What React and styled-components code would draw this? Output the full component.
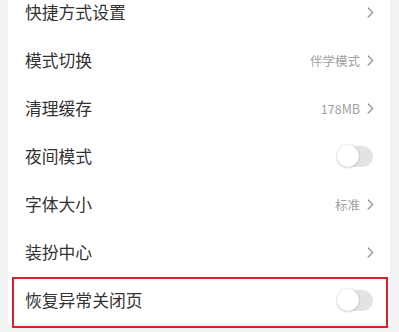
import React from "react";
import styled, { createGlobalStyle } from "styled-components";

const Global = createGlobalStyle`
  html, body { margin: 0; padding: 0; background: #f2f2f2; overflow: hidden; }
  body { font-family: "Noto Sans CJK SC", "Noto Sans", sans-serif; }
`;

const Page = styled.div`
  width: 399px;
  height: 332px;
  overflow: hidden;
  background: #f2f2f2;
  padding: 0 9px 0 8px;
  box-sizing: border-box;
`;

const Panel = styled.div`
  background: #fff;
  margin-top: -12px;
  display: flex;
  flex-direction: column;
`;

const Row = styled.div`
  position: relative;
  height: 48px;
  display: flex;
  align-items: center;
  justify-content: space-between;
  padding: 0 16px 0 17px;
`;

const Label = styled.span`
  font-size: 16.8px;
  color: #333;
  letter-spacing: 0;
`;

const Right = styled.div`
  display: flex;
  align-items: center;
  gap: 7px;
`;

const Value = styled.span`
  font-size: 12.5px;
  color: #a0a0a0;
`;

const Track = styled.div`
  width: 36px;
  height: 21px;
  border-radius: 11px;
  background: #e3e3e3;
  position: relative;
  margin-right: 1px;
`;

const Knob = styled.div`
  position: absolute;
  left: 0;
  top: -0.5px;
  width: 22px;
  height: 22px;
  border-radius: 50%;
  background: #fff;
  box-shadow: 0 0 2px rgba(0, 0, 0, 0.22), 0 1px 2px rgba(0, 0, 0, 0.12);
`;

const Highlight = styled.div`
  position: absolute;
  left: 4px;
  right: 2px;
  top: 1px;
  bottom: -4px;
  border: 2px solid #d8232e;
  pointer-events: none;
`;

const Chevron = () => (
  <svg width="7" height="11" viewBox="0 0 7 11" style={{ display: "block" }}>
    <polyline points="1.2,1 5.6,5.5 1.2,10" fill="none" stroke="#9a9a9a" strokeWidth="1.4" strokeLinecap="round" strokeLinejoin="round" />
  </svg>
);

const Toggle = () => (
  <Track>
    <Knob />
  </Track>
);

const items = [
  { label: "快捷方式设置", type: "link" },
  { label: "模式切换", type: "link", value: "伴学模式" },
  { label: "清理缓存", type: "link", value: "178MB" },
  { label: "夜间模式", type: "toggle" },
  { label: "字体大小", type: "link", value: "标准" },
  { label: "装扮中心", type: "link" },
  { label: "恢复异常关闭页", type: "toggle", highlight: true },
];

export default function App() {
  return (
    <Page>
      <Global />
      <Panel>
        {items.map((it) => (
          <Row key={it.label}>
            <Label>{it.label}</Label>
            {it.type === "toggle" ? (
              <Toggle />
            ) : (
              <Right>
                {it.value && <Value>{it.value}</Value>}
                <Chevron />
              </Right>
            )}
            {it.highlight && <Highlight />}
          </Row>
        ))}
      </Panel>
    </Page>
  );
}
